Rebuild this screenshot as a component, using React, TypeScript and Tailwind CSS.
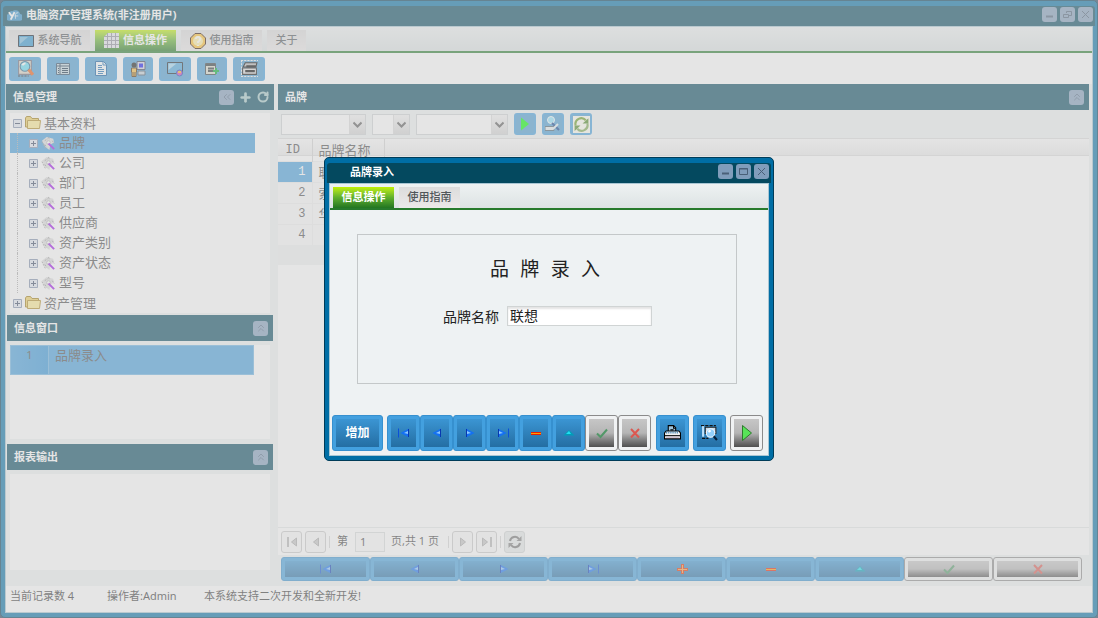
import React from 'react';
import { ChevronsLeft, ChevronsUp, Plus, RotateCw } from 'lucide-react';

type IconProps = { children: React.ReactNode; size?: string; box?: string };

const Svg = ({ children, size = 'w-4 h-4', box = '0 0 16 16' }: IconProps) => (
  <svg viewBox={box} className={`${size} shrink-0`} fill="none" aria-hidden="true">{children}</svg>
);

const icons: Record<string, React.ReactNode> = {
  first: (
    <Svg>
      <path d="M2.5 3.5v9" stroke="#0b50d8" strokeWidth="1" />
      <path d="M13 3.5v9L4.5 8z" fill="#1470f2" />
      <path d="M12 6v3L8 8z" fill="#8cc8ff" />
      <path d="M12.5 4v8" stroke="#0838b0" />
    </Svg>
  ),
  prev: (
    <Svg>
      <path d="M12 3.5v9L3.5 8z" fill="#1470f2" />
      <path d="M11 6v3L7 8z" fill="#8cc8ff" />
      <path d="M11.5 4v8" stroke="#0838b0" />
    </Svg>
  ),
  next: (
    <Svg>
      <path d="M4 3.5v9L12.500 8z" fill="#1470f2" />
      <path d="M5 6v3l4-1z" fill="#8cc8ff" />
      <path d="M4.500 4v8" stroke="#0838b0" />
    </Svg>
  ),
  last: (
    <Svg>
      <path d="M13.500 3.500v9" stroke="#0b50d8" />
      <path d="M3 3.500v9L11.500 8z" fill="#1470f2" />
      <path d="M4 6v3l4-1z" fill="#8cc8ff" />
      <path d="M3.500 4v8" stroke="#0838b0" />
    </Svg>
  ),
  plus: (
    <Svg>
      <path d="M8.500 3v10M3 8.500h11" stroke="#e03000" strokeWidth="3" />
      <path d="M8.500 4v8M4 8.500h9" stroke="#ffa040" />
    </Svg>
  ),
  minus: (
    <Svg>
      <path d="M3 8.500h10" stroke="#e62000" strokeWidth="3" />
      <path d="M3 8.500h10" stroke="#ffa000" />
    </Svg>
  ),
  up: (
    <Svg>
      <path d="m8 5-5.500 5.500h11z" fill="#009db8" />
      <path d="M8 6 5 9h5z" fill="#20dff2" />
    </Svg>
  ),
  check: <Svg><path d="m3 8.500 3.500 3.500L13 4.500" stroke="#529868" strokeWidth="2" /></Svg>,
  cross: <Svg><path d="m4 4 8 8.500M12 4l-8 8.500" stroke="#dc5850" strokeWidth="2" /></Svg>,
  play: <Svg><path d="M3.500.5v15L12.500 8z" fill="#58e458" stroke="#2e7a2e" /></Svg>,
  run: <Svg><path d="M4 1.500v13L12 8z" fill="#00ff00" /></Svg>,
  print: (
    <Svg size="w-[17px] h-[17px]">
      <path d="M4 7V1.500h5l2 2V7" fill="#9fc4dd" stroke="#000" />
      <path d="M9 1v3h2M6 5.500h3" stroke="#000" />
      <path d="M.5 8.500 2 6.500h12l1.500 2v5.500H.5z" fill="#f2f2f2" stroke="#000" />
      <path d="M2 8h12" stroke="#3a7fb0" strokeWidth="2" strokeDasharray="1 1" />
      <path d="M0 11h16" stroke="#000" />
      <path d="M2 12.500h12" stroke="#c9b6c9" />
    </Svg>
  ),
  preview: (
    <Svg size="w-[17px] h-[17px]">
      <path d="M0 1.500h14M1 13.500h6" stroke="#111" strokeDasharray="3 1" />
      <path d="M2 2v10" stroke="#bfe2fa" strokeWidth="2" />
      <path d="M4 3h10v6H4z" fill="#c8dced" stroke="#222" />
      <circle cx="9" cy="8.500" r="4" fill="#93d0fb" stroke="#f2f8ff" />
      <path d="M7 7.500 9 6" stroke="#fff" strokeWidth="2" />
      <path d="m12 11.500 3 3.500" stroke="#061f38" strokeWidth="2" />
    </Svg>
  ),
  search: (
    <Svg size="w-[17px] h-[17px]">
      <path d="M1.500.5h12v13h-12z" fill="#ddd5c4" stroke="#667" />
      <circle cx="7.500" cy="6" r="4.500" fill="#62dcf5" />
      <circle cx="7.500" cy="6" r="4.500" stroke="#28658c" />
      <path d="M5 5q1-2 3-2" stroke="#fff" strokeWidth="2" />
      <path d="m11 9 4 5" stroke="#f25c10" strokeWidth="3" />
      <path d="M1 15h10" stroke="#222" strokeDasharray="2 1" />
    </Svg>
  ),
  form: (
    <Svg>
      <path d="M1.500 2.500h13v11h-13z" fill="#c5d8e0" stroke="#2a4a66" />
      <path d="M5 3v10M2 5h12" stroke="#203c56" />
      <path d="M7 7.500h6M7 9.500h6M7 11.500h6M3 7.500h1M3 9.500h1M3 11.500h1" stroke="#122c44" />
    </Svg>
  ),
  doc: (
    <Svg>
      <path d="M2.500.5h8l3 3v11h-11z" fill="#f6fcff" stroke="#0a5aa0" />
      <path d="M10 .5V4h3.500M5 4.500h4M5 6.500h4M5 8.500h6M5 10.500h6M5 12.500h5" stroke="#1a6cb2" />
    </Svg>
  ),
  user: (
    <Svg>
      <path d="M7 .5h8v8H7z" fill="#d5d5e2" stroke="#3b435a" />
      <path d="M9 2.500h4v4H9z" fill="#1616f0" />
      <path d="M8 10h7v4H8z" fill="#c5d0d8" stroke="#475b6a" />
      <circle cx="4" cy="4" r="2.500" fill="#1b1b18" />
      <path d="M1.500 7h5v4H6v4.500H2V11h-.5z" fill="#f6bc40" stroke="#4b2b01" />
      <path d="M4 11v4" stroke="#4b2b01" />
    </Svg>
  ),
  monitor: (
    <Svg>
      <path d="M.5 1.500h15v11H.5z" fill="#4ca6dc" stroke="#182028" />
      <path d="M1.500 2.500h8L1.500 9z" fill="#a5d8f2" />
      <circle cx="12.500" cy="12" r="3" fill="#d840b0" stroke="#1746bd" />
      <path d="M11 11h3" stroke="#ffb020" strokeWidth="2" />
    </Svg>
  ),
  addList: (
    <Svg>
      <path d="M1.500 2.500h10v11h-10z" fill="#dcdccc" stroke="#353f42" />
      <path d="M2 4h9M4 7.500h6M4 10h5" stroke="#2c3639" strokeWidth="2" />
      <path d="M12 7v6M9 10h6" stroke="#00aa30" strokeWidth="2" />
    </Svg>
  ),
  printer: (
    <Svg size="w-[17px] h-[17px]">
      <path d="M0 .5h16M0 15.500h16M.5 0v16" stroke="#f2f2f2" strokeDasharray="2 1" />
      <path d="M4 2.500h11l-1 4H2z" fill="#b7b7b7" stroke="#000" />
      <path d="M1.500 7.500h13v6h-13z" fill="#dcdcdc" stroke="#111" />
      <path d="M5 6h9M4 10.500h9" stroke="#000" strokeWidth="2" />
    </Svg>
  ),
  query: (
    <Svg>
      <path d="M0 10.500h9v4H0z" fill="#e6eef0" stroke="#49606f" />
      <circle cx="6" cy="4" r="3.500" fill="#8ce4ff" stroke="#f4fcff" />
      <path d="m7 7 7 7" stroke="#0c3f8c" strokeWidth="2" />
      <path d="m13 8-5 5" stroke="#e6f2f6" strokeWidth="2" />
    </Svg>
  ),
  reload: (
    <Svg size="w-[17px] h-[17px]">
      <path d="M0 0h16v16H0z" fill="#fffef3" />
      <path d="M2.500 9A5.500 5.500 0 0 1 12 4" stroke="#689c20" strokeWidth="2" />
      <path d="M13.500 7A5.500 5.500 0 0 1 4 12" stroke="#7ca850" strokeWidth="2" />
      <path d="M14.500 2v5H9zM1.500 14V9H7z" fill="#4c8820" />
    </Svg>
  ),
};

type BtnProps = { label: string; icon?: string; className?: string; gray?: boolean };

// glossy button: a light ring around a darker gradient face
const Btn = ({ label, icon, className = '', gray }: BtnProps) => (
  <button
    type="button"
    aria-label={label}
    className={`rounded-[3px] border p-[3px] ${gray ? 'border-[#8b8b8b] bg-[#f0f2f3]' : 'border-[#3690cf] bg-[#43a0df]'} ${className}`}
  >
    <span
      className={`flex h-full w-full items-center justify-center overflow-hidden text-xs font-bold text-white ${
        gray ? 'bg-linear-to-b from-[#c6c6c6] via-[#b5b5b5] to-[#505050]' : 'bg-linear-to-b from-[#3b95d3] to-[#246ea3]'
      }`}
    >
      {icon ? icons[icon] : label}
    </span>
  </button>
);

const ToolBtn = ({ label, icon, className = '' }: BtnProps) => (
  <button type="button" aria-label={label} className={`flex items-center justify-center rounded-[3px] border-2 border-[#429edc] bg-[#4a9dd3] ${className}`}>
    {icons[icon!]}
  </button>
);

const capClass = 'flex h-[15px] w-[15px] shrink-0 items-center justify-center rounded-[3px] bg-[#809dbb] text-[#566f8a]';

const WinButtons = ({ restore }: { restore?: boolean }) => (
  <div className="mt-px flex gap-[3px]">
    <button type="button" aria-label="最小化" className={capClass}>
      <Svg size="w-[13px] h-[13px]" box="0 0 13 13"><path d="M3 8.500h7" stroke="#4a6078" strokeWidth="2" /></Svg>
    </button>
    <button type="button" aria-label={restore ? '还原' : '最大化'} className={capClass}>
      <Svg size="w-[13px] h-[13px]" box="0 0 13 13">
        {restore
          ? <path d="M5.500 5V3.500h5v4H8M2.500 6.500h5v3h-5z" stroke="#4a6078" />
          : <path d="M2.500 3.500h8v6h-8zM2 4h9" stroke="#4a6078" />}
      </Svg>
    </button>
    <button type="button" aria-label="关闭" className={capClass}>
      <Svg size="w-[13px] h-[13px]" box="0 0 13 13"><path d="m3 3 7 7M10 3l-7 7" stroke="#4a6078" strokeWidth="1" /></Svg>
    </button>
  </div>
);

type FrameProps = { title: string; logo?: React.ReactNode; restore?: boolean; titlePad: string; className?: string; children: React.ReactNode };

const Frame = ({ title, logo, restore, titlePad, className = '', children }: FrameProps) => (
  <div className={`flex flex-col rounded-[5px] border border-[#003c58] bg-[#006ea5] pt-[5px] pb-1 ${className}`}>
    <div className={`mx-[2px] flex h-5 shrink-0 items-start justify-between rounded-t-[3px] bg-[#04495f] pr-[2px] ${titlePad}`}>
      <h1 className="flex items-center gap-1 text-[11px] leading-[18px] font-bold text-white">{logo}{title}</h1>
      <WinButtons restore={restore} />
    </div>
    <div className="mx-1 flex min-h-0 flex-1 flex-col border border-[#a9c6d3] bg-[#eef2f3]">{children}</div>
  </div>
);

const Tab = ({ label, icon, active, className = '' }: { label: string; icon?: React.ReactNode; active?: boolean; className?: string }) => (
  <button
    type="button"
    role="tab"
    aria-selected={!!active}
    className={`flex h-full items-center justify-center gap-1 text-[11px] whitespace-nowrap ${
      active
        ? 'bg-linear-to-b from-[#c0f000] via-[#5fb02c] to-[#217521] font-bold text-white'
        : 'bg-linear-to-b from-[#dcdcdc] to-[#ece9e9] font-medium text-[#50565a]'
    } ${className}`}
  >
    {icon}{label}
  </button>
);

const TabBar = ({ children }: { children: React.ReactNode }) => (
  <div role="tablist" className="flex h-[26px] shrink-0 gap-[5px] border-b-2 border-[#277a2c] bg-linear-to-b from-[#eef2f2] to-[#dde3e4] px-[3px] pt-[3px]">
    {children}
  </div>
);

const PanelHeader = ({ title, children, className = '' }: { title: string; children?: React.ReactNode; className?: string }) => (
  <div className={`flex h-[26px] shrink-0 items-center justify-between bg-[#04495f] pr-[5px] pl-[7px] ${className}`}>
    <h2 className="text-[11px] font-bold text-white">{title}</h2>
    <div className="flex items-center gap-[5px]">{children}</div>
  </div>
);

const Collapse = () => (
  <button type="button" aria-label="折叠" className={capClass}><ChevronsUp className="h-3 w-3" /></button>
);

const Expander = ({ open }: { open?: boolean }) => (
  <Svg size="w-[9px] h-[9px]" box="0 0 9 9">
    <path d="M.5.5h8v8h-8z" fill="#e2e8f2" stroke="#8090ac" />
    <path d={open ? 'M2 4.500h5' : 'M2 4.500h5M4.500 2v5'} stroke="#3c4a66" />
  </Svg>
);

const Folder = () => (
  <Svg>
    <path d="M.5 12V3l1-1.500h4L7 3.500h6.500V12z" fill="#f0d060" stroke="#a07c10" />
    <path d="M2.500 5.500h13l-1 8h-12z" fill="#ffec90" stroke="#b08a20" />
  </Svg>
);

const Leaf = () => (
  <Svg size="w-[15px] h-[15px]">
    <path d="m1 5 5-4 7 2 1 4-4 2-1 6-4-3z" fill="#dedede" />
    <path d="m1 6 4 8M4 5l3-2M8 1l1 3M12 5l2 3M4 9l2 3" stroke="#999" strokeDasharray="2 1" />
    <circle cx="8" cy="7" r="2" fill="#fff" stroke="#b5b5b5" />
    <path d="m8 8 6 6" stroke="#9c10e8" strokeWidth="2" />
  </Svg>
);

const leaves = ['品牌', '公司', '部门', '员工', '供应商', '资产类别', '资产状态', '型号'];

const TreeRoot = ({ label, open }: { label: string; open?: boolean }) => (
  <button type="button" className="flex w-full items-center gap-[3px] py-px pl-[3px] text-[13px] leading-[18px] text-[#4a4a4a]">
    <Expander open={open} /><Folder />{label}
  </button>
);

const Tree = () => (
  <ul className="mx-1 mt-[3px] shrink-0 bg-white">
    <li>
      <TreeRoot label="基本资料" open />
      <ul>
        {leaves.map((label, i) => (
          <li key={label} className={`mr-[15px] flex h-5 ${i === 0 ? 'bg-[#459fdd]' : ''}`}>
            <span className="ml-[7px] w-[15px] border-l border-dotted border-[#aaa]" />
            <button type="button" className="-ml-[3px] flex items-center gap-[3px] text-[13px] text-[#4a4a4a]">
              <Expander /><Leaf /><span>{label}</span>
            </button>
          </li>
        ))}
      </ul>
    </li>
    <li><TreeRoot label="资产管理" /></li>
  </ul>
);

const Select = ({ label, className }: { label: string; className: string }) => (
  <div className={`relative h-[21px] border border-[#cfd3d4] bg-white ${className}`}>
    <select aria-label={label} className="h-full w-full appearance-none text-xs text-[#333]"><option></option></select>
    <span className="pointer-events-none absolute inset-y-0 right-0 flex w-4 items-center justify-center border-l border-[#dadada] bg-linear-to-b from-[#f4f4f4] to-[#d5d5d5]">
      <Svg size="w-[9px] h-[9px]" box="0 0 9 9"><path d="m.5 2.500 4 4 4-4" stroke="#5a5a5a" strokeWidth="2" /></Svg>
    </span>
  </div>
);

const PageBtn = ({ label, d, bar }: { label: string; d: string; bar?: string }) => (
  <button type="button" aria-label={label} className="flex h-[22px] w-[21px] items-center justify-center rounded-[3px] border border-[#c8c8c8] bg-[#f8f8f8]">
    <Svg size="w-3 h-3" box="0 0 12 12">
      <path d={d} fill="#c4c4c4" stroke="#a8a8a8" />
      {bar && <path d={bar} stroke="#b4b4b4" strokeWidth="2" />}
    </Svg>
  </button>
);

const Sep = () => <span className="h-3 w-px bg-[#d5d5d5]" />;

const rows = ['联想', '索尼', '华硕', ''];

const navButtons: BtnProps[] = [
  { label: '首记录', icon: 'first' },
  { label: '上一条', icon: 'prev' },
  { label: '下一条', icon: 'next' },
  { label: '末记录', icon: 'last' },
  { label: '新增', icon: 'plus' },
  { label: '删除', icon: 'minus' },
  { label: '编辑', icon: 'up' },
  { label: '保存', icon: 'check', gray: true },
  { label: '取消', icon: 'cross', gray: true },
];

const toolbar = [
  { label: '查询', icon: 'search', width: 'w-8' },
  { label: '表单', icon: 'form', width: 'w-8' },
  { label: '文档', icon: 'doc', width: 'w-8' },
  { label: '用户', icon: 'user', width: 'w-[30px]' },
  { label: '界面', icon: 'monitor', width: 'w-8' },
  { label: '添加', icon: 'addList', width: 'w-[30px]' },
  { label: '打印', icon: 'printer', width: 'w-8' },
];

const Logo = () => (
  <svg viewBox="0 0 16 16" className="h-4 w-[15px]" fill="none">
    <path d="M3 14a3 3 0 0 1-1-7 3 3 0 0 1 4-3 5 5 0 0 1 8 3 3 3 0 0 1-1 7z" fill="#3090cc" />
    <path d="m2 5 3 4M8 5l-4 8" stroke="#fff" strokeWidth="2" />
    <path d="M9 12V7.500q0-2 3-2M8 9h4" stroke="#cfe6f5" />
  </svg>
);

const ScreenIcon = () => (
  <Svg><path d="M.5 2.500h15v11H.5z" fill="#3096d0" stroke="#101a26" /><path d="M2 4h8l-8 7z" fill="#78bce0" /></Svg>
);

const GridIcon = () => (
  <Svg size="w-[15px] h-[15px]" box="0 0 15 15">
    <path d="M4 0h11v15H0V4z" fill="#e6e6ee" />
    <path d="M0 3.500h15M0 7.500h15M0 11.500h15M3.500 0v15M7.500 0v15M11.500 0v15" stroke="#8f8f9d" />
  </Svg>
);

const HelpIcon = () => (
  <Svg>
    <path d="M5 .5h6L15.500 5v6L11 15.500H5L.5 11V5z" fill="#ffc030" stroke="#301000" strokeWidth="1" />
    <circle cx="8" cy="8" r="5" fill="#ffeeA0" />
    <path d="M6 6q0-2 2-2t2 2-2 3v1M8 12v1" stroke="#fffdf0" strokeWidth="2" />
  </Svg>
);

const Sidebar = () => (
  <aside className="flex w-[268px] shrink-0 flex-col">
    <PanelHeader title="信息管理">
      <button type="button" aria-label="收起" className={capClass}><ChevronsLeft className="h-3 w-3" /></button>
      <button type="button" aria-label="添加" className="text-[#a5c8c8]"><Plus className="h-[13px] w-[13px]" strokeWidth={5} /></button>
      <button type="button" aria-label="刷新" className="text-[#a5c8c8]"><RotateCw className="h-3 w-3" strokeWidth={4} /></button>
    </PanelHeader>
    <Tree />
    <PanelHeader title="信息窗口" className="mx-px mt-[2px]"><Collapse /></PanelHeader>
    <div className="mx-1 mt-1 h-[94px] shrink-0 bg-white">
      <div className="mr-4 flex h-[30px] border border-[#6bb2e3] bg-[#459fdd] text-[13px] leading-[18px] text-[#4a4a4a]">
        <span className="w-[38px] border-r border-[#6bb2e3] bg-linear-to-r from-[#459fdd] to-[#3094d9] text-center text-[11px]">1</span>
        <span className="pl-[6px]">品牌录入</span>
      </div>
    </div>
    <PanelHeader title="报表输出" className="mx-px mt-[5px]"><Collapse /></PanelHeader>
    <div className="mx-1 mt-1 mb-4 flex-1 bg-white" />
  </aside>
);

const BrandPanel = () => (
  <main className="mr-[3px] ml-1 flex min-w-0 flex-1 flex-col">
    <PanelHeader title="品牌"><Collapse /></PanelHeader>
    <div className="flex h-7 shrink-0 items-center gap-[6px] pl-[3px]">
      <Select label="字段" className="w-[85px]" />
      <Select label="条件" className="w-[38px]" />
      <Select label="值" className="w-[92px]" />
      <ToolBtn label="执行" icon="run" className="h-[22px] w-[22px]" />
      <ToolBtn label="查找" icon="query" className="h-[22px] w-[22px]" />
      <ToolBtn label="刷新" icon="reload" className="h-[22px] w-[22px]" />
    </div>
    <div className="min-h-0 flex-1 bg-white">
      <div className="border-y border-[#dcdcdc] bg-linear-to-b from-[#fcfcfc] to-[#ececec]">
        <table className="-mb-[110px] table-fixed border-collapse text-[13px] text-[#4a4a4a]">
          <thead>
            <tr className="h-[22px]">
              <th className="w-[34px] border-r border-[#d2d2d2] pr-1 text-xs leading-5 font-normal [font-family:'Liberation_Mono',monospace]">ID</th>
              <th className="w-[72px] border-r border-[#d2d2d2] pl-[6px] text-left leading-5 font-normal">品牌名称</th>
            </tr>
          </thead>
          <tbody>
            {rows.map((name, i) => (
              <tr key={i} className="h-[21px] border-t border-[#eee] bg-[#f8f8f8]">
                <td className={`border-r border-[#eee] pr-[6px] text-right text-xs leading-5 [font-family:'Liberation_Mono',monospace] ${i === 0 ? 'bg-[#459fdd] text-white' : ''}`}>{i + 1}</td>
                <td className="pl-[6px] leading-5">{name}</td>
              </tr>
            ))}
            <tr className="h-5 bg-[#eef0f1]"><td colSpan={2} /></tr>
          </tbody>
        </table>
      </div>
    </div>
    <div className="flex h-7 shrink-0 items-center gap-[3px] border-t border-[#e4e8e8] bg-white pl-[3px] text-[11px] text-[#3c3c3c]">
      <PageBtn label="首页" d="M10.500 2v8L5.500 6z" bar="M2 1v10" />
      <PageBtn label="上一页" d="M8.500 2v8L3.500 6z" />
      <Sep />
      <label htmlFor="page" className="px-1">第</label>
      <input id="page" defaultValue="1" className="h-5 w-[30px] border border-[#d8dcdc] bg-[#fafafa] px-1" />
      <span className="w-[57px] pl-[3px] whitespace-nowrap">页,共 1 页</span>
      <Sep />
      <PageBtn label="下一页" d="M3.500 2v8l5-4z" />
      <PageBtn label="末页" d="M1.500 2v8l5-4z" bar="M10 1v10" />
      <Sep />
      <button type="button" aria-label="刷新列表" className="flex h-[22px] w-[21px] items-center justify-center rounded-[3px] border border-[#d0d4d4] bg-[#e6eaea]">
        <Svg>
          <path d="M3 7a5 5 0 0 1 9-2M13 9a5 5 0 0 1-9 2" stroke="#707070" strokeWidth="2" />
          <path d="M14.500 2v5h-5zM1.500 14V9h5z" fill="#808080" />
        </Svg>
      </button>
    </div>
    <div className="mt-[2px] mb-[7px] grid h-[22px] shrink-0 grid-cols-9 pr-[7px] pl-[3px]">
      {navButtons.map((b) => <Btn key={b.label} {...b} />)}
    </div>
  </main>
);

const Dialog = () => (
  <div role="dialog" aria-label="品牌录入" className="w-[450px]">
    <Frame title="品牌录入" titlePad="pl-[23px]">
      <TabBar>
        <Tab label="信息操作" active className="w-[61px]" />
        <Tab label="使用指南" className="w-[61px]" />
      </TabBar>
      <div className="mt-6 mr-[31px] ml-[27px] h-[150px] border border-[#c4c8c9]">
        <h2 className="mt-5 pr-1 text-center text-[19px] leading-8 text-[#222] [font-family:'Liberation_Mono','Noto_Sans_CJK_SC',monospace]">品 牌 录 入</h2>
        <div className="mt-[18px] flex items-center gap-2 pl-[85px]">
          <label htmlFor="brand" className="pt-[2px] text-sm text-[#222]">品牌名称</label>
          <input id="brand" defaultValue="联想" className="h-5 w-[145px] border border-[#d0d4d4] bg-white px-[2px] text-sm text-[#222] shadow-[inset_0_2px_2px_#e4e4e4]" />
        </div>
      </div>
      <div className="mt-[31px] mb-1 flex h-9 gap-1 pl-[2px]">
        <Btn label="增加" className="w-[51px]" />
        <div className="mr-px flex">
          {navButtons.filter((b) => b.icon !== 'plus').map((b) => <Btn key={b.label} {...b} className="w-[33px]" />)}
        </div>
        <Btn label="打印" icon="print" className="w-[33px]" />
        <Btn label="预览" icon="preview" className="w-[33px]" />
        <Btn label="运行" icon="play" gray className="w-[33px]" />
      </div>
    </Frame>
  </div>
);

export default function App() {
  return (
    <div className="min-h-screen bg-[#24405c] [font-family:'Noto_Sans','Noto_Sans_CJK_SC',sans-serif]">
      <Frame title="电脑资产管理系统(非注册用户)" logo={<Logo />} restore titlePad="pl-1" className="min-h-screen">
        <TabBar>
          <Tab label="系统导航" icon={<ScreenIcon />} className="w-[81px]" />
          <Tab label="信息操作" icon={<GridIcon />} active className="w-[81px]" />
          <Tab label="使用指南" icon={<HelpIcon />} className="w-[81px]" />
          <Tab label="关于" className="w-[39px]" />
        </TabBar>
        <div className="flex h-[31px] shrink-0 items-center gap-[6px] bg-white pl-[3px]">
          {toolbar.map((t) => <ToolBtn key={t.icon} label={t.label} icon={t.icon} className={`h-6 ${t.width}`} />)}
        </div>
        <div className="flex flex-1">
          <Sidebar />
          <BrandPanel />
        </div>
        <footer className="flex h-[26px] shrink-0 items-center bg-white pb-[5px] pl-1 text-[11px] text-[#333]">
          <span className="w-[97px]">当前记录数 4</span>
          <span className="w-[97px]">操作者:Admin</span>
          <span>本系统支持二次开发和全新开发!</span>
        </footer>
      </Frame>
      <div className="fixed inset-0 flex items-center justify-center bg-[#cccccc]/50 pb-px">
        <Dialog />
      </div>
    </div>
  );
}
